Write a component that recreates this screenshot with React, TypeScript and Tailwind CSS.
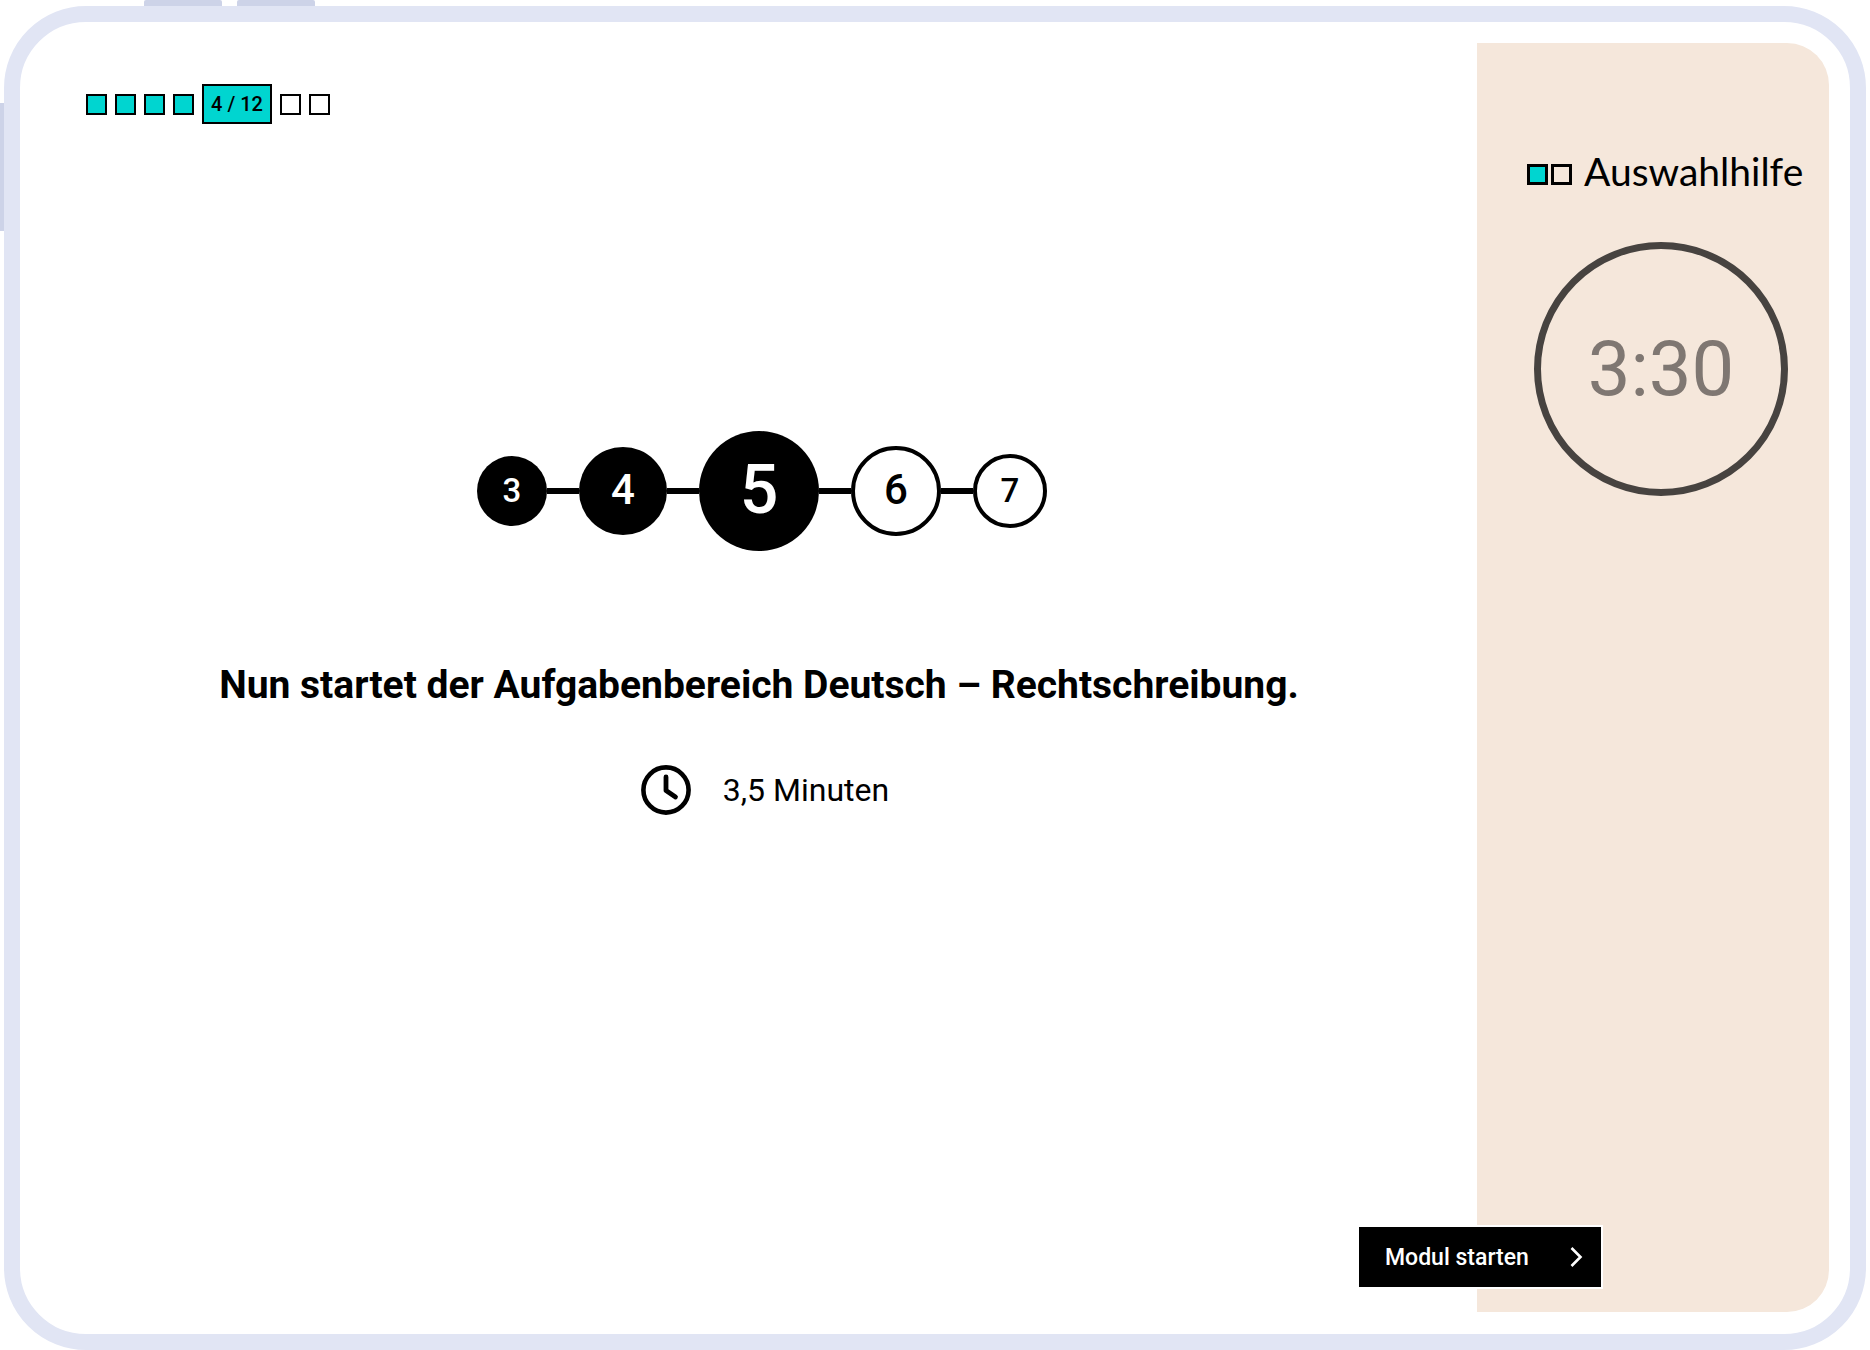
import clsx from 'clsx';
import { Fragment } from 'react';

interface Step {
  value: number;
  className: string;
}

const steps: Step[] = [
  { value: 3, className: 'size-[70px] bg-black text-white text-[33px]' },
  { value: 4, className: 'size-[88px] bg-black text-white text-[42px]' },
  { value: 5, className: 'size-[120px] bg-black text-white text-[68px]' },
  { value: 6, className: 'size-[90px] border-4 border-black text-[42px]' },
  { value: 7, className: 'size-[74px] border-4 border-black text-[33px]' }
];

function Square({ filled, className }: { filled?: boolean; className?: string }) {
  return (
    <span
      className={clsx('size-[21px] shrink-0 border-black', filled && 'bg-[#00d5d0]', className)}
    />
  );
}

function Progress() {
  return (
    <div className="flex items-center gap-2">
      <Square filled className="border-2" />
      <Square filled className="border-2" />
      <Square filled className="border-2" />
      <Square filled className="border-2" />
      <span className="flex h-10 w-[70px] items-center justify-center border-2 border-black bg-[#00d5d0] text-[20px] leading-6 font-medium">
        4 / 12
      </span>
      <Square className="border-2" />
      <Square className="border-2" />
    </div>
  );
}

function Stepper() {
  return (
    <ol className="flex items-center pl-1.5">
      {steps.map((step, index) => (
        <Fragment key={step.value}>
          {index > 0 && <li aria-hidden="true" className="h-1.5 w-8 bg-black" />}
          <li
            className={clsx(
              'flex items-center justify-center rounded-full pb-0.5 leading-none font-medium',
              step.className
            )}
          >
            {step.value}
          </li>
        </Fragment>
      ))}
    </ol>
  );
}

function ClockIcon() {
  return (
    <svg width="50" height="50" viewBox="0 0 50 50" fill="none" stroke="currentColor">
      <circle cx="25" cy="25" r="22.6" strokeWidth="4.6" />
      <path d="M25 12v13.5l9.5 6.500" strokeWidth="4.8" strokeLinecap="round" strokeLinejoin="round" />
    </svg>
  );
}

function Sidebar() {
  return (
    <aside className="flex w-[352px] shrink-0 flex-col rounded-r-[42px] bg-[#f5e7db] pt-[104px]">
      <div className="flex items-center gap-3 pl-[50px]">
        <div className="flex gap-[3px] pt-1.5">
          <Square filled className="border-3" />
          <Square className="border-3" />
        </div>
        <h2 className="font-[Lato,sans-serif] text-[39px] leading-[48px]">Auswahlhilfe</h2>
      </div>
      <div
        role="timer"
        className="mt-[47px] ml-[57px] flex size-[254px] items-center justify-center rounded-full border-[7px] border-[#474340] text-[76px] leading-none text-[#7f7772]"
      >
        3:30
      </div>
    </aside>
  );
}

export default function App() {
  return (
    <div className="relative flex min-h-screen overflow-hidden bg-white px-1 pt-1.5 font-[Roboto,sans-serif] text-black">
      {/* hardware keys on the edge of the tablet */}
      <span className="absolute top-0 left-36 h-1.5 w-[78px] rounded-t-xs bg-[#cdd3e8]" />
      <span className="absolute top-0 left-[237px] h-1.5 w-[78px] rounded-t-xs bg-[#cdd3e8]" />
      <span className="absolute top-[103px] left-0 h-32 w-1 bg-[#cdd3e8]" />

      <div className="relative flex flex-1 rounded-[82px] border-16 border-[#e1e5f4] bg-white px-[21px] pt-[21px] pb-[22px]">
        <main className="flex flex-1 flex-col pt-[41px]">
          <div className="pl-[45px]">
            <Progress />
          </div>
          <div className="mt-[307px] flex flex-col items-center">
            <Stepper />
            <h1 className="mt-[110px] text-[39px] leading-[48px] font-bold">
              Nun startet der Aufgabenbereich Deutsch – Rechtschreibung.
            </h1>
            <div className="mt-14 flex items-center gap-8 pl-3">
              <ClockIcon />
              <p className="text-[32px] leading-10">3,5 Minuten</p>
            </div>
          </div>
        </main>
        <Sidebar />

        <button
          type="button"
          className="absolute right-[249px] bottom-[47px] flex h-[60px] w-[242px] items-center justify-between bg-black pt-0.5 pr-[15px] pl-[26px] text-[23px] font-medium text-white ring-2 ring-white"
        >
          Modul starten
          <svg width="20" height="24" viewBox="0 0 20 24" fill="none" stroke="currentColor">
            <path d="M5.5 2l9 9-9 9" strokeWidth="2.6" />
          </svg>
        </button>
      </div>
    </div>
  );
}
